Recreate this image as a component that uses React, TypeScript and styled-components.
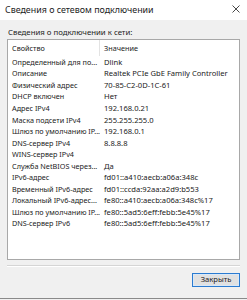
import React from "react";
import styled, { createGlobalStyle } from "styled-components";

const Global = createGlobalStyle`
  html, body { margin: 0; padding: 0; background: #f0f0f0; }
  body { width: 247px; height: 300px; overflow: hidden; }
`;

const Window = styled.div`
  width: 247px;
  height: 299px;
  box-sizing: border-box;
  display: flex;
  flex-direction: column;
  background: #f0f0f0;
  border-bottom: 1px solid #8a8a8a;
  font-family: "Noto Sans", "Open Sans", "DejaVu Sans", sans-serif;
  color: #222222;
`;

const TitleBar = styled.div`
  height: 20px;
  flex: none;
  background: #ffffff;
  display: flex;
  align-items: center;
  justify-content: space-between;
  padding: 0 7px 2px 5px;
  box-sizing: border-box;
  font-size: 8.9px;
`;

const Body = styled.div`
  flex: 1;
  display: flex;
  flex-direction: column;
  padding: 6px 7px 0 7px;
`;

const Caption = styled.div`
  font-size: 7.8px;
  line-height: 12px;
  height: 13px;
  padding-left: 1px;
`;

const ListBox = styled.div`
  height: 221px;
  box-sizing: border-box;
  background: #ffffff;
  border: 1px solid #a8a8a8;
  display: flex;
  flex-direction: column;
`;

const Row = styled.div<{ $header?: boolean }>`
  display: grid;
  grid-template-columns: 92px 1fr;
  height: ${(p) => (p.$header ? "16px" : "11.55px")};
  align-items: center;
  flex: none;
`;

const Cell = styled.div<{ $header?: boolean; $key?: boolean }>`
  white-space: nowrap;
  overflow: hidden;
  padding-left: 4px;
  height: 100%;
  display: flex;
  align-items: center;
  box-sizing: border-box;
  font-size: ${(p) => (p.$key ? "7.25px" : "7.6px")};
  border-right: ${(p) => (p.$header ? "1px solid #e3e3e3" : "none")};
`;

const Separator = styled.div`
  margin-top: 5px;
  height: 1px;
  background: #d5d5d5;
  border-bottom: 1px solid #ffffff;
`;

const Footer = styled.div`
  display: flex;
  justify-content: flex-end;
  padding-top: 6px;
`;

const Button = styled.button`
  width: 48px;
  height: 14px;
  box-sizing: border-box;
  border: 1px solid #2b7bd0;
  background: #e1e1e1;
  box-shadow: inset 0 0 0 1px #d8e8f8;
  font-family: inherit;
  font-size: 7.6px;
  color: #222222;
  padding: 0;
  margin: 0;
  line-height: 1;
`;

const rows: [string, string][] = [
  ["Определенный для по...", "Dlink"],
  ["Описание", "Realtek PCIe GbE Family Controller"],
  ["Физический адрес", "70-85-C2-0D-1C-61"],
  ["DHCP включен", "Нет"],
  ["Адрес IPv4", "192.168.0.21"],
  ["Маска подсети IPv4", "255.255.255.0"],
  ["Шлюз по умолчанию IP...", "192.168.0.1"],
  ["DNS-сервер IPv4", "8.8.8.8"],
  ["WINS-сервер IPv4", ""],
  ["Служба NetBIOS через...", "Да"],
  ["IPv6-адрес", "fd01::a410:aecb:a06a:348c"],
  ["Временный IPv6-адрес", "fd01::ccda:92aa:a2d9:b553"],
  ["Локальный IPv6-адрес...", "fe80::a410:aecb:a06a:348c%17"],
  ["Шлюз по умолчанию IP...", "fe80::5ad5:6eff:febb:5e45%17"],
  ["DNS-сервер IPv6", "fe80::5ad5:6eff:febb:5e45%17"],
];

export default function App() {
  return (
    <>
      <Global />
      <Window>
        <TitleBar>
          <span>Сведения о сетевом подключении</span>
          <svg width="8" height="8" viewBox="0 0 8 8">
            <path d="M0.5 0.5 L7.5 7.5 M7.5 0.5 L0.5 7.5" stroke="#333" strokeWidth="0.9" />
          </svg>
        </TitleBar>
        <Body>
          <Caption>Сведения о подключении к сети:</Caption>
          <ListBox>
            <Row $header>
              <Cell $header $key>Свойство</Cell>
              <Cell $key>Значение</Cell>
            </Row>
            {rows.map(([k, v], i) => (
              <Row key={i}>
                <Cell $key>{k}</Cell>
                <Cell>{v}</Cell>
              </Row>
            ))}
          </ListBox>
          <Separator />
          <Footer>
            <Button>Закрыть</Button>
          </Footer>
        </Body>
      </Window>
    </>
  );
}
